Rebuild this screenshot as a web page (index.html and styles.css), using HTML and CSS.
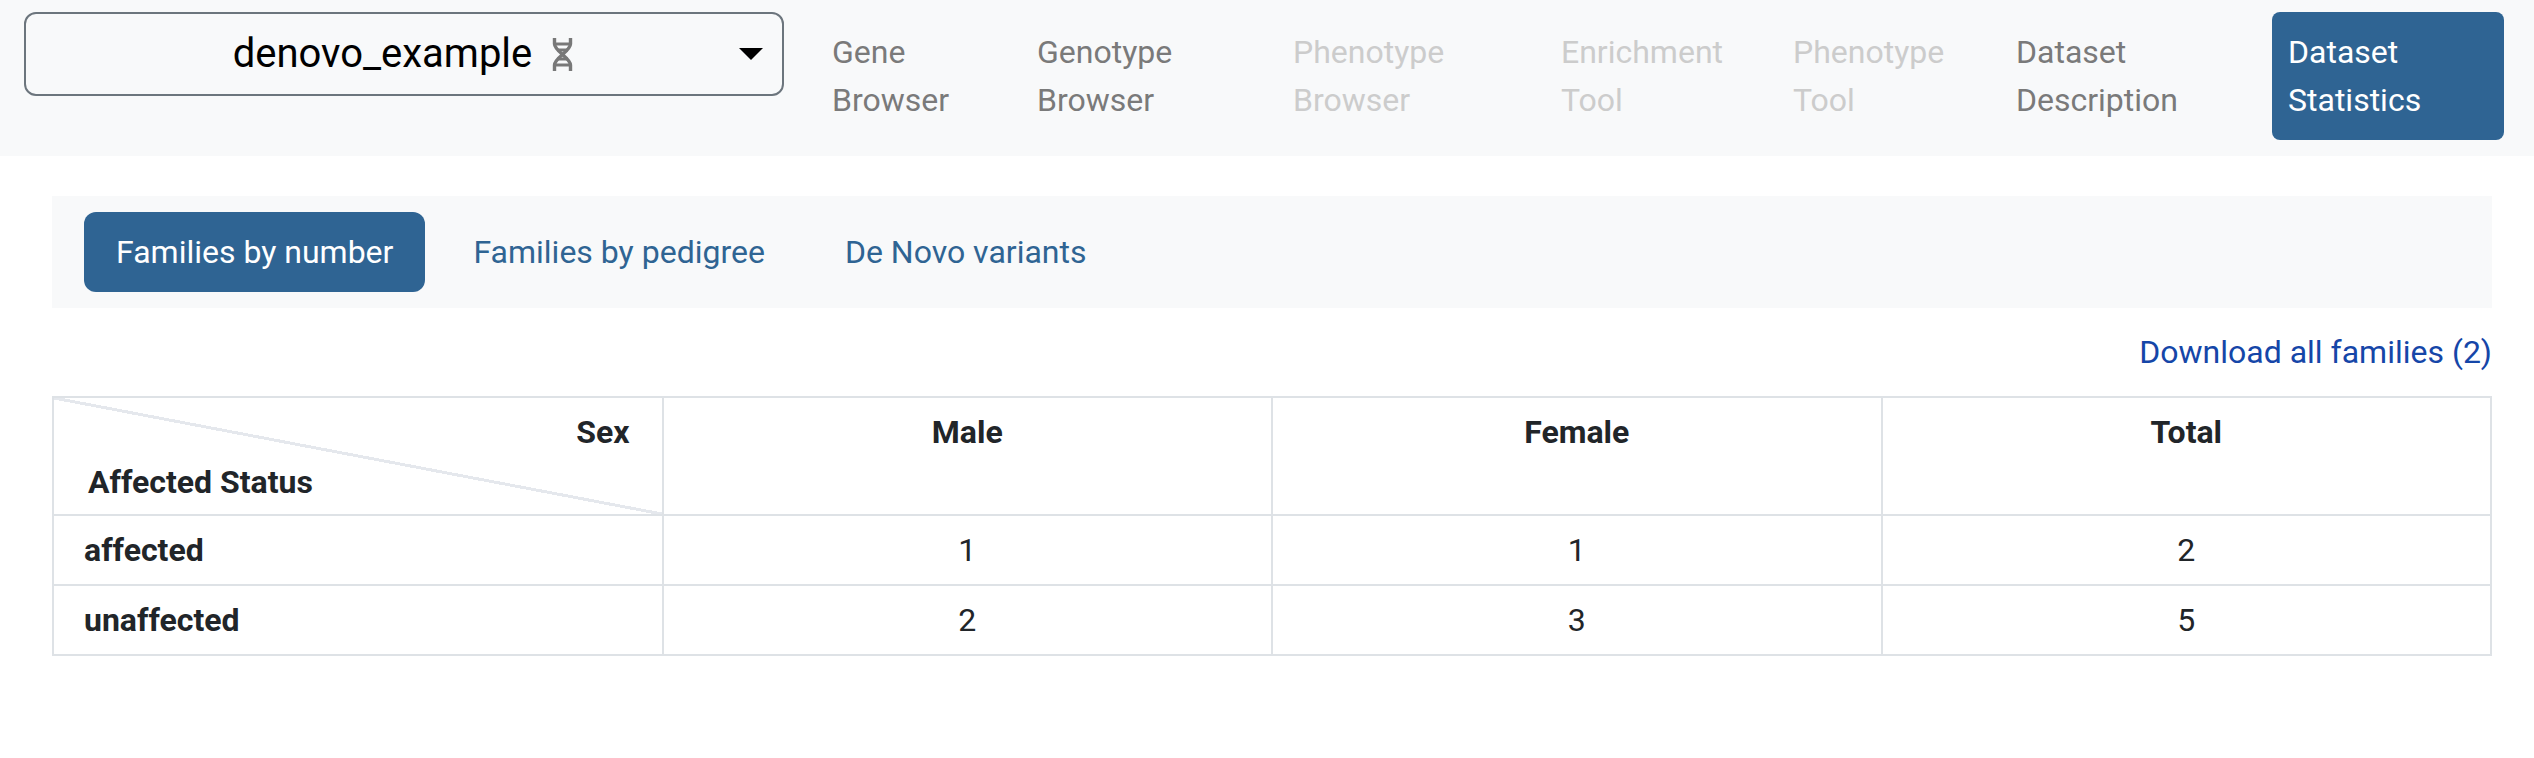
FILE: index.html
```html
<!DOCTYPE html>
<html lang="en">
<head>
    <meta charset="UTF-8">
    <title>Dataset Statistics</title>
    <link rel="stylesheet" href="styles.css">
</head>
<body>
    <header class="top-bar">
        <div class="dataset-select">
            <span class="dataset-name">denovo_example</span>
            <svg class="dna-icon" viewBox="0 0 21 33" fill="none" stroke="#787878" stroke-width="3.4">
                <path d="M2.5 0v6c0 7 16 14 16 21v6"/>
                <path d="M18.5 0v6c0 7-16 14-16 21v6"/>
                <path d="M2.5 6h16M5 12h11M5 21h11M2.5 27h16" stroke-width="2.8"/>
            </svg>
            <span class="caret"></span>
        </div>
        <nav class="main-nav">
            <a class="nav-item">Gene<br>Browser</a>
            <a class="nav-item">Genotype<br>Browser</a>
            <a class="nav-item disabled">Phenotype<br>Browser</a>
            <a class="nav-item disabled">Enrichment<br>Tool</a>
            <a class="nav-item disabled">Phenotype<br>Tool</a>
            <a class="nav-item">Dataset<br>Description</a>
            <a class="nav-item active">Dataset<br>Statistics</a>
        </nav>
    </header>

    <main class="content">
        <div class="tabs">
            <a class="tab active">Families by number</a>
            <a class="tab">Families by pedigree</a>
            <a class="tab">De Novo variants</a>
        </div>

        <div class="download-row">
            <a class="download-link">Download all families (2)</a>
        </div>

        <table class="stats-table">
            <thead>
                <tr>
                    <th class="corner">
                        <div class="corner-sex">Sex</div>
                        <div class="corner-status">Affected Status</div>
                    </th>
                    <th>Male</th>
                    <th>Female</th>
                    <th>Total</th>
                </tr>
            </thead>
            <tbody>
                <tr>
                    <th class="row-head">affected</th>
                    <td>1</td>
                    <td>1</td>
                    <td>2</td>
                </tr>
                <tr>
                    <th class="row-head">unaffected</th>
                    <td>2</td>
                    <td>3</td>
                    <td>5</td>
                </tr>
            </tbody>
        </table>
    </main>
</body>
</html>
```

FILE: styles.css
```css
body {
    margin: 0;
    background: #fff;
    color: #212529;
    font-family: Roboto, 'Liberation Sans', sans-serif;
    font-size: 32px;
    line-height: 48px;
}

.top-bar {
    display: flex;
    height: 156px;
    box-sizing: border-box;
    padding: 12px 30px 0 24px;
    background: #f8f9fa;
}

.dataset-select {
    display: flex;
    align-items: center;
    justify-content: center;
    position: relative;
    width: 760px;
    height: 84px;
    box-sizing: border-box;
    padding-right: 2px;
    border: 2px solid #6c757d;
    border-radius: 12px;
    color: #000;
    font-size: 40px;
}

.dna-icon {
    width: 21px;
    height: 33px;
    margin-left: 20px;
}

.caret {
    position: absolute;
    right: 19px;
    top: 34px;
    width: 0;
    height: 0;
    border-left: 12px solid transparent;
    border-right: 12px solid transparent;
    border-top: 12px solid #000;
}

.main-nav {
    display: grid;
    grid-template-columns: 205px 256px 268px 232px 223px 272px 232px;
    margin-left: 32px;
    height: 128px;
}

.nav-item {
    padding: 16px;
    color: #7a7a7a;
}

.nav-item.disabled {
    color: #ccc;
}

.nav-item.active {
    background: #2f6493;
    color: #fff;
    border-radius: 8px;
}

.content {
    padding: 40px 42px 0 52px;
}

.tabs {
    display: flex;
    gap: 16px;
    padding: 16px 32px;
    background: #f8f9fa;
}

.tab {
    padding: 16px 32px;
    color: #2f6493;
    border-radius: 12px;
}

.tab.active {
    background: #2f6493;
    color: #fff;
}

.download-row {
    display: flex;
    justify-content: flex-end;
    padding: 20px 0;
}

.download-link {
    color: #1546a8;
}

.stats-table {
    width: 100%;
    table-layout: fixed;
    border-collapse: collapse;
}

.stats-table th,
.stats-table td {
    padding: 10px 32px;
    border: 2px solid #dee2e6;
    text-align: center;
}

.stats-table thead th {
    vertical-align: top;
}

.stats-table .corner {
    padding: 10px 32px 8px 34px;
    background: linear-gradient(to top right, transparent calc(50% - 1.5px), #e5e8ed calc(50% - 1.5px), #e5e8ed calc(50% + 1.5px), transparent calc(50% + 1.5px));
}

.corner-sex {
    text-align: right;
}

.corner-status {
    margin-top: 2px;
    text-align: left;
}

.stats-table .row-head {
    padding-left: 30px;
    text-align: left;
}
```
